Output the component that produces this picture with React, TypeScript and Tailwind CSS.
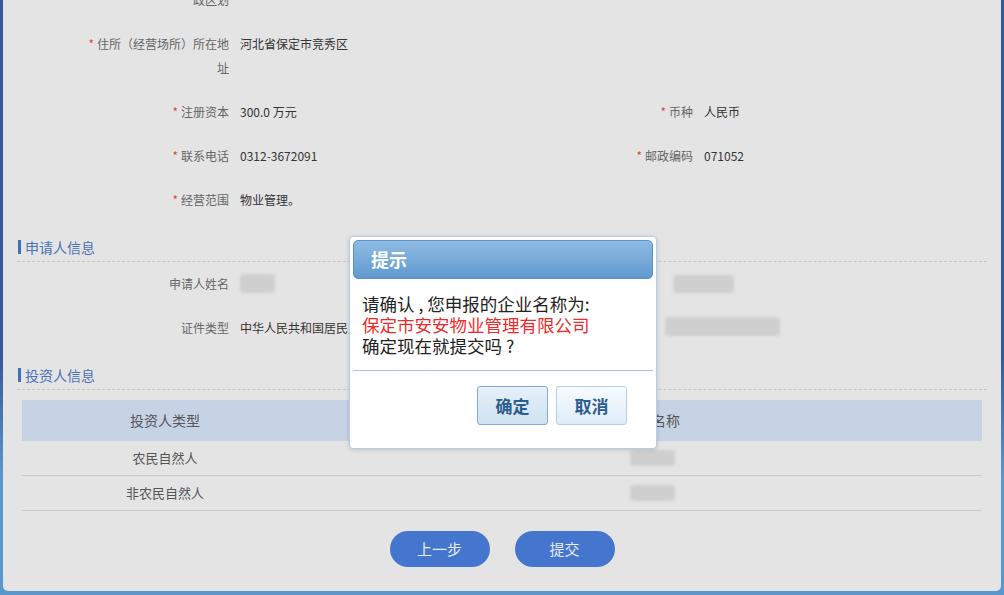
import React from 'react';

const font = 'font-["Noto_Sans_CJK_SC","Noto_Sans",sans-serif]';

function Star() {
  return <span className="mr-[3px] text-[#e0444a]">*</span>;
}

function Pair({ label, value, required = true }: { label: string; value?: React.ReactNode; required?: boolean }) {
  return (
    <div className="flex w-[464px] shrink-0 py-[10px] text-[12px] leading-[24px]">
      <div className="w-[226px] shrink-0 pl-[83px] text-right text-[#666]">
        {required && <Star />}
        {label}
      </div>
      <div className="pl-[11px] whitespace-nowrap text-[#333]">{value}</div>
    </div>
  );
}

function Blob({ className }: { className: string }) {
  return <div className={`rounded-[4px] bg-[#cfcfcf] blur-[1.5px] ${className}`} />;
}

function SectionTitle({ title }: { title: string }) {
  return (
    <div className="mx-[14px] flex items-center border-b border-dashed border-[#c6c6c6] pt-[15px] pb-[4px] leading-[20px]">
      <span className="ml-[1px] h-[14px] w-[3px] bg-[#3f6fc0]" />
      <span className="ml-[4px] text-[14px] text-[#4a72b8]">{title}</span>
    </div>
  );
}

function Dialog() {
  return (
    <div className="absolute left-[349px] top-[236px] flex h-[213px] w-[308px] flex-col rounded-[4px] border border-[#b9cde2] bg-white p-[3px] shadow-[0_1px_4px_rgba(0,0,0,0.15)]">
      <div className="flex h-[39px] items-center rounded-[5px] border border-[#5b90c5] bg-linear-to-b from-[#8ebbe2] to-[#6199cf] pl-[17px] text-[18px] font-bold text-white">
        提示
      </div>
      <div className="mt-[14px] pl-[9px] text-[17.5px] leading-[21px] text-[#222]">
        <div>请确认 , 您申报的企业名称为:</div>
        <div className="text-[#ee2b2b]">保定市安安物业管理有限公司</div>
        <div>确定现在就提交吗 ?</div>
      </div>
      <div className="mt-[14px] h-px bg-[#a9c1da]" />
      <div className="mt-[15px] flex justify-end gap-[8px] pr-[26px]">
        <button
          type="button"
          className="h-[39px] w-[71px] rounded-[3px] border border-[#86abd0] bg-linear-to-b from-[#e6f0f9] to-[#cfe1f2] text-[17px] font-bold text-[#2b5d8e]"
        >
          确定
        </button>
        <button
          type="button"
          className="h-[39px] w-[71px] rounded-[3px] border border-[#b6cfe6] bg-linear-to-b from-[#f7fbfe] to-[#dfecf8] text-[17px] font-bold text-[#2b5d8e]"
        >
          取消
        </button>
      </div>
    </div>
  );
}

export default function App() {
  return (
    <div
      className={`relative flex h-[595px] w-[1004px] flex-col overflow-hidden bg-linear-to-b from-[#36599b] from-60% to-[#5a97cc] to-80% px-[3px] ${font}`}
    >
      <div className="h-[591px] shrink-0 overflow-hidden rounded-b-[5px] bg-[#e4e4e4]">
        <div className="-mt-[46px]">
          <div className="flex">
            <Pair label="住所（经营场所）所在行政区划" value="" />
          </div>
          <div className="flex">
            <Pair label="住所（经营场所）所在地址" value="河北省保定市竞秀区" />
          </div>
          <div className="flex">
            <Pair label="注册资本" value="300.0 万元" />
            <Pair label="币种" value="人民币" />
          </div>
          <div className="flex">
            <Pair label="联系电话" value="0312-3672091" />
            <Pair label="邮政编码" value="071052" />
          </div>
          <div className="flex">
            <Pair label="经营范围" value="物业管理。" />
          </div>

          <SectionTitle title="申请人信息" />
          <div className="flex">
            <Pair required={false} label="申请人姓名" value={<Blob className="mt-[2px] h-[19px] w-[35px]" />} />
            <div className="flex h-[44px] items-center pl-[206px]">
              <Blob className="h-[18px] w-[61px]" />
            </div>
          </div>
          <div className="flex">
            <Pair required={false} label="证件类型" value="中华人民共和国居民身份证" />
            <div className="flex h-[44px] items-center pl-[198px]">
              <Blob className="-mt-[4px] h-[19px] w-[115px]" />
            </div>
          </div>

          <SectionTitle title="投资人信息" />
          <div className="mx-[19px] mt-[10px]">
            <div className="grid h-[41px] grid-cols-[286px_1fr] items-center bg-[#c6d3e5] text-center text-[14px] text-[#555]">
              <div>投资人类型</div>
              <div>投资人名称</div>
            </div>
            {['农民自然人', '非农民自然人'].map((t) => (
              <div
                key={t}
                className="grid h-[35px] grid-cols-[286px_1fr] items-center border-b border-[#cbcbcb] text-center text-[13px] text-[#555]"
              >
                <div>{t}</div>
                <div className="flex justify-center pl-[14px]">
                  <Blob className="h-[16px] w-[45px]" />
                </div>
              </div>
            ))}
          </div>

          <div className="mt-[20px] flex justify-center gap-[25px]">
            <button type="button" className="h-[36px] w-[100px] rounded-full bg-[#4576cd] text-[15px] text-[#e6edf8]">
              上一步
            </button>
            <button type="button" className="h-[36px] w-[100px] rounded-full bg-[#4576cd] text-[15px] text-[#e6edf8]">
              提交
            </button>
          </div>
        </div>
      </div>
      <Dialog />
    </div>
  );
}
